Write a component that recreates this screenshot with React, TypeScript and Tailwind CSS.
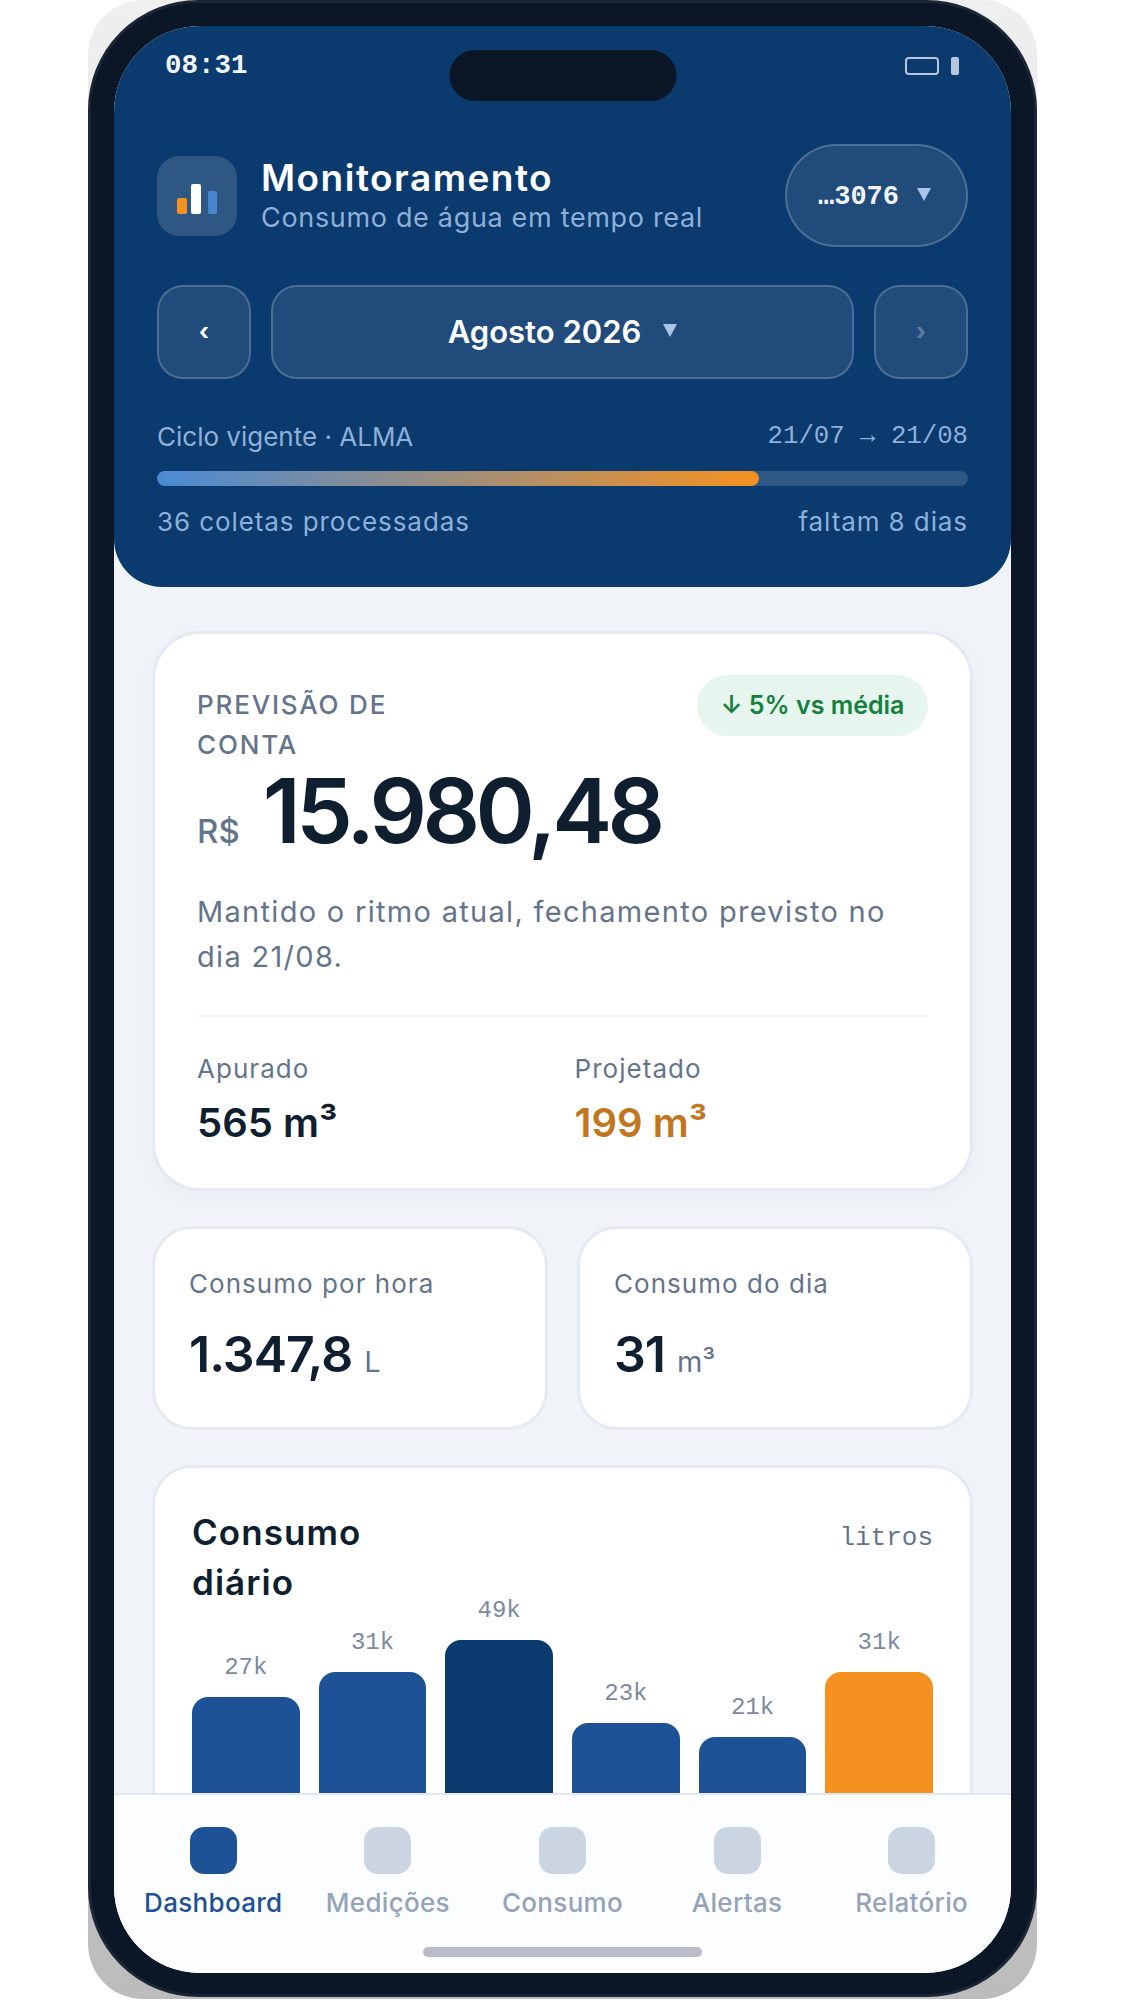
import React from 'react';

const mono = "font-['Liberation_Mono',monospace]";

const bars = [
  { label: '27k', height: 'h-[142px]', color: 'bg-[#1d5296]' },
  { label: '31k', height: 'h-[167px]', color: 'bg-[#1d5296]' },
  { label: '49k', height: 'h-[199px]', color: 'bg-[#0a3a6e]' },
  { label: '23k', height: 'h-[116px]', color: 'bg-[#1d5296]' },
  { label: '21k', height: 'h-[102px]', color: 'bg-[#1d5296]' },
  { label: '31k', height: 'h-[167px]', color: 'bg-[#f59120]' },
];

const tabs = ['Dashboard', 'Medições', 'Consumo', 'Alertas', 'Relatório'];

const Triangle: React.FC<{ className?: string }> = ({ className }) => (
  <svg viewBox="0 0 14 13" className={className} fill="currentColor">
    <path d="M0 0h14L7 13z" />
  </svg>
);

const Header: React.FC = () => (
  <header className="rounded-b-[48px] bg-[#0a3a6e] px-[43px] pb-[51px] pt-[22px]">
    <div className="flex h-[36px] items-center justify-between pl-[8px] pr-[9px]">
      <span className={`${mono} text-[27.5px] font-bold leading-none text-[#f1f5f9]`}>08:31</span>
      <div className="flex items-center gap-[12px]">
        <div className="h-[18px] w-[34px] rounded-[4px] border-2 border-[#b8c6dc]" />
        <div className="h-[18px] w-[8px] rounded-[2px] bg-[#b8c6dc]" />
      </div>
    </div>

    <div className="mt-[60px] flex h-[103px] items-center justify-between">
      <div className="flex items-center gap-[24px]">
        <div className="flex h-[80px] w-[80px] items-end justify-center rounded-[22px] bg-white/15 pb-[22px]">
          <div className="h-[16px] w-[10px] rounded-[2px] bg-[#f59120]" />
          <div className="ml-[4px] h-[30px] w-[10px] rounded-[2px] bg-white" />
          <div className="ml-[7px] h-[23px] w-[9px] rounded-[2px] bg-[#4a86d0]" />
        </div>
        <div>
          <div className="-mt-[2px] text-[37px] font-semibold leading-[44px] tracking-[0.04em] text-white">Monitoramento</div>
          <div className="mt-[2px] text-[27px] leading-[32px] tracking-[0.025em] text-[#8fb0d8]">Consumo de água em tempo real</div>
        </div>
      </div>
      <div className="flex h-[103px] w-[183px] items-center justify-center gap-[18px] rounded-full border-2 border-white/20 bg-white/[0.09] pr-[4px]">
        <span className={`${mono} mt-[3px] text-[27px] font-bold text-[#f1f5f9]`}>…3076</span>
        <Triangle className="mb-[2px] h-[13px] w-[14px] text-[#a9c4e6]" />
      </div>
    </div>

    <div className="mt-[38px] flex h-[94px] gap-[20px]">
      <div className="flex w-[94px] items-center justify-center rounded-[26px] border-2 border-white/20 bg-white/[0.09] text-[24px] font-bold text-white">‹</div>
      <div className="flex flex-1 items-center justify-center gap-[22px] rounded-[26px] border-2 border-white/20 bg-white/[0.09]">
        <span className="text-[31px] font-semibold text-white">Agosto 2026</span>
        <Triangle className="mb-[4px] h-[13px] w-[14px] text-[#a9c4e6]" />
      </div>
      <div className="flex w-[94px] items-center justify-center rounded-[26px] border-2 border-white/20 bg-white/[0.09] text-[24px] font-bold text-white/30">›</div>
    </div>

    <div className="mt-[42px] flex h-[30px] items-center justify-between text-[26px] text-[#8fb0d8]">
      <span>Ciclo vigente · ALMA</span>
      <span className={`${mono} mt-[2px] text-[25.7px]`}>21/07 → 21/08</span>
    </div>
    <div className="mt-[20px] h-[15px] overflow-hidden rounded-full bg-white/15">
      <div className="h-full w-[74.2%] rounded-full bg-linear-to-r/srgb from-[#4a8bd6] to-[#f59120]" />
    </div>
    <div className="mt-[20px] flex h-[30px] items-center justify-between text-[26px] tracking-[0.035em] text-[#8fb0d8]">
      <span>36 coletas processadas</span>
      <span>faltam 8 dias</span>
    </div>
  </header>
);

const ForecastCard: React.FC = () => (
  <section className="rounded-[48px] border-[3px] border-[#e5eaf2] bg-white px-[42px] pb-[40px] pt-[41px] shadow-[0_6px_20px_rgba(15,23,42,0.03)]">
    <div className="flex items-start justify-between">
      <div className="mt-[10px] w-[230px] text-[26px] font-medium leading-[40px] tracking-[0.07em] text-[#64748b]">PREVISÃO DE CONTA</div>
      <div className="flex h-[61px] w-[231px] items-center justify-center rounded-full bg-[#e6f6ee] text-[25px] font-semibold text-[#15803d]">↓ 5% vs média</div>
    </div>
    <div className="-mt-[9px] flex items-baseline gap-[23px]">
      <span className="text-[33px] font-medium text-[#64748b]">R$</span>
      <span className="text-[90px] font-semibold leading-[110px] tracking-[-0.05em] text-[#0f1f30]">15.980,48</span>
    </div>
    <p className="mt-[23px] text-[29px] leading-[45px] tracking-[0.045em] text-[#64748b]">Mantido o ritmo atual, fechamento previsto no dia 21/08.</p>
    <div className="mt-[36px] grid grid-cols-2 border-t-2 border-[#eef2f6] pt-[35px]">
      <div>
        <div className="text-[26px] leading-[34px] tracking-[0.04em] text-[#64748b]">Apurado</div>
        <div className="mt-[12px] text-[40px] font-semibold leading-[50px] text-[#0f1f30]">565 m³</div>
      </div>
      <div className="pl-[12px]">
        <div className="text-[26px] leading-[34px] tracking-[0.04em] text-[#64748b]">Projetado</div>
        <div className="mt-[12px] text-[40px] font-semibold leading-[50px] text-[#c2761e]">199 m³</div>
      </div>
    </div>
  </section>
);

const StatCard: React.FC<{ title: string; value: string; unit: string }> = ({ title, value, unit }) => (
  <div className="h-[204px] rounded-[40px] border-[3px] border-[#e5eaf2] bg-white px-[34px] pt-[38px]">
    <div className="text-[26px] leading-[34px] tracking-[0.04em] text-[#64748b]">{title}</div>
    <div className="mt-[22px] flex items-baseline gap-[12px]">
      <span className="text-[50px] font-semibold leading-[62px] tracking-[-0.02em] text-[#0f1f30]">{value}</span>
      <span className="text-[29px] text-[#64748b]">{unit}</span>
    </div>
  </div>
);

const ChartCard: React.FC = () => (
  <section className="h-[480px] rounded-t-[40px] border-[3px] border-[#e5eaf2] bg-white px-[37px] pt-[39px]">
    <div className="flex items-start justify-between">
      <div className="w-[200px] text-[35px] font-semibold leading-[50px] tracking-[0.03em] text-[#0f1f30]">Consumo diário</div>
      <span className={`${mono} mt-[12px] text-[26px] text-[#64748b]`}>litros</span>
    </div>
    <div className="mt-[11px] flex h-[221px] items-end gap-[19px]">
      {bars.map((bar, i) => (
        <div key={i} className="flex flex-1 flex-col items-center">
          <span className={`${mono} mb-[16px] text-[24px] leading-[26px] text-[#7c8aa0]`}>{bar.label}</span>
          <div className={`${bar.height} w-full rounded-t-[16px] ${bar.color}`} />
        </div>
      ))}
    </div>
  </section>
);

const BottomNav: React.FC = () => (
  <nav className="absolute inset-x-0 bottom-0 h-[180px] border-t-2 border-[#e2e8f0] bg-[#fcfdfe]">
    <div className="grid grid-cols-5 px-[12px] pt-[32px]">
      {tabs.map((tab, i) => (
        <div key={tab} className="flex flex-col items-center">
          <div className={`h-[47px] w-[47px] rounded-[14px] ${i === 0 ? 'bg-[#1d5296]' : 'bg-[#cbd5e1]'}`} />
          <span className={`mt-[13px] text-[26px] font-medium leading-[32px] tracking-[0.012em] ${i === 0 ? 'text-[#1d5296]' : 'text-[#94a3b8]'}`}>{tab}</span>
        </div>
      ))}
    </div>
    <div className="mx-auto mt-[28px] h-[10px] w-[279px] rounded-full bg-[#b9bcc4]" />
  </nav>
);

export default function App() {
  return (
    <div className="flex h-[2000px] w-[1125px] justify-center overflow-hidden bg-white font-['Inter',sans-serif]">
      <div className="h-[1999px] w-[949px] rounded-[55px] bg-linear-to-b from-[#efefef] to-[#bcbcbc]">
        <div className="h-[1997px] rounded-[110px] border-[3px] border-[#1c2736] bg-[#0b1726] px-[23px] pb-[21px] pt-[23px]">
          <div className="relative h-full overflow-hidden rounded-[86px] bg-[#f0f4f8]">
            <div className="absolute left-1/2 top-[24px] h-[51px] w-[227px] -translate-x-1/2 rounded-full bg-[#0b1626]" />
            <Header />
            <main className="flex flex-col gap-[35px] px-[38px] pt-[44px]">
              <ForecastCard />
              <div className="grid grid-cols-2 gap-[29px]">
                <StatCard title="Consumo por hora" value="1.347,8" unit="L" />
                <StatCard title="Consumo do dia" value="31" unit="m³" />
              </div>
              <ChartCard />
            </main>
            <BottomNav />
          </div>
        </div>
      </div>
    </div>
  );
}
